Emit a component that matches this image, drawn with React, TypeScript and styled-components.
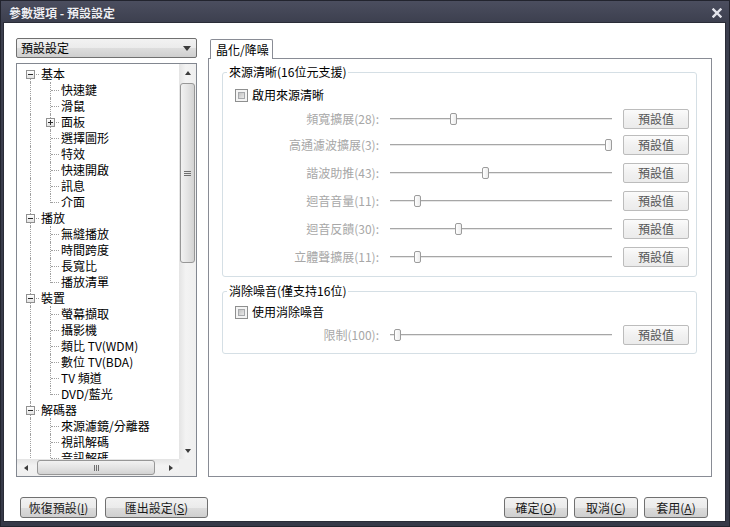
import React from "react";
import styled, { createGlobalStyle } from "styled-components";

const GlobalStyle = createGlobalStyle`
  html, body {
    margin: 0;
    padding: 0;
    background: #2f3240;
  }
  body {
    font-family: "Noto Sans CJK TC", "Liberation Sans", sans-serif;
    font-size: 12px;
  }
`;

type VLine = "full" | "top" | "bottom" | "none";

type TreeItem = {
  label: string
  level: 0 | 1
  expander?: "minus" | "plus"
  first?: boolean
  last?: boolean
};

const tree: TreeItem[] = [
  { label: "基本", level: 0, expander: "minus", first: true },
  { label: "快速鍵", level: 1 },
  { label: "滑鼠", level: 1 },
  { label: "面板", level: 1, expander: "plus" },
  { label: "選擇圖形", level: 1 },
  { label: "特效", level: 1 },
  { label: "快速開啟", level: 1 },
  { label: "訊息", level: 1 },
  { label: "介面", level: 1, last: true },
  { label: "播放", level: 0, expander: "minus" },
  { label: "無縫播放", level: 1 },
  { label: "時間跨度", level: 1 },
  { label: "長寬比", level: 1 },
  { label: "播放清單", level: 1, last: true },
  { label: "裝置", level: 0, expander: "minus" },
  { label: "螢幕擷取", level: 1 },
  { label: "攝影機", level: 1 },
  { label: "類比 TV(WDM)", level: 1 },
  { label: "數位 TV(BDA)", level: 1 },
  { label: "TV 頻道", level: 1 },
  { label: "DVD/藍光", level: 1, last: true },
  { label: "解碼器", level: 0, expander: "minus" },
  { label: "來源濾鏡/分離器", level: 1 },
  { label: "視訊解碼", level: 1 },
  { label: "音訊解碼", level: 1 },
];

type SliderItem = {
  label: string
  pos: number
  top: number
};

const clarity: SliderItem[] = [
  { label: "頻寬擴展(28):", pos: 0.28, top: 6 },
  { label: "高通濾波擴展(3):", pos: 1, top: 6 },
  { label: "諧波助推(43):", pos: 0.43, top: 8 },
  { label: "迴音音量(11):", pos: 0.11, top: 8 },
  { label: "迴音反饋(30):", pos: 0.3, top: 8 },
  { label: "立體聲擴展(11):", pos: 0.11, top: 8 },
];

const TRACK_WIDTH = 222;
const THUMB_WIDTH = 7;

export default function App() {
  return (
    <>
      <GlobalStyle />
      <Window>
        <TitleBar>
          <span>參數選項 - 預設設定</span>
          <CloseIcon width="10" height="10" viewBox="0 0 10 10">
            <path d="M1.5 1.5 L8.5 8.5 M8.5 1.5 L1.5 8.5" stroke="#e4e5ec" strokeWidth="2.4" strokeLinecap="square" />
          </CloseIcon>
        </TitleBar>

        <Client>
          <MainRow>
            <LeftCol>
              <Combo>
                <span>預設設定</span>
                <Arrow $dir="down" $size={4} />
              </Combo>

              <TreeBox>
                <TreeContent>
                  {tree.map((item) => (
                    <TreeRow key={item.label}>
                      {item.level === 0 ? (
                        <Guide $v={item.first ? "bottom" : "full"} $h>
                          {item.expander && <Expander $plus={item.expander === "plus"} />}
                        </Guide>
                      ) : (
                        <>
                          <Guide $v="full" />
                          <Guide $v={item.last ? "top" : "full"} $h>
                            {item.expander && <Expander $plus={item.expander === "plus"} />}
                          </Guide>
                        </>
                      )}
                      <TreeLabel>{item.label}</TreeLabel>
                    </TreeRow>
                  ))}
                </TreeContent>

                <VScroll>
                  <ScrollButton><Arrow $dir="up" $size={3} /></ScrollButton>
                  <VTrack>
                    <VThumb>
                      <Grip $vertical={false} />
                    </VThumb>
                  </VTrack>
                  <ScrollButton><Arrow $dir="down" $size={3} /></ScrollButton>
                </VScroll>

                <HScroll>
                  <ScrollButton><Arrow $dir="left" $size={3} /></ScrollButton>
                  <HTrack>
                    <HThumb>
                      <Grip $vertical />
                    </HThumb>
                  </HTrack>
                  <ScrollButton><Arrow $dir="right" $size={3} /></ScrollButton>
                </HScroll>

                <Corner />
              </TreeBox>
            </LeftCol>

            <RightCol>
              <TabStrip>
                <Tab>晶化/降噪</Tab>
              </TabStrip>
              <Panel>
                <Group $top={5} $bottom={9}>
                  <Legend>來源清晰(16位元支援)</Legend>
                  <CheckRow $top={7}>
                    <CheckBox />
                    <span>啟用來源清晰</span>
                  </CheckRow>
                  {clarity.map((s) => (
                    <SliderRow key={s.label} $top={s.top}>
                      <SliderLabel>{s.label}</SliderLabel>
                      <Track>
                        <Thumb style={{ left: Math.round(s.pos * (TRACK_WIDTH - THUMB_WIDTH)) }} />
                      </Track>
                      <SmallButton>預設值</SmallButton>
                    </SliderRow>
                  ))}
                </Group>

                <Group $top={6} $bottom={8}>
                  <Legend>消除噪音(僅支持16位)</Legend>
                  <CheckRow $top={5}>
                    <CheckBox />
                    <span>使用消除噪音</span>
                  </CheckRow>
                  <SliderRow $top={5}>
                    <SliderLabel>限制(100):</SliderLabel>
                    <Track>
                      <Thumb style={{ left: Math.round(0.02 * (TRACK_WIDTH - THUMB_WIDTH)) }} />
                    </Track>
                    <SmallButton>預設值</SmallButton>
                  </SliderRow>
                </Group>
              </Panel>
            </RightCol>
          </MainRow>

          <BottomRow>
            <ButtonGroup $gap={8}>
              <DialogButton $w={77}>恢復預設(<u>I</u>)</DialogButton>
              <DialogButton $w={103}>匯出設定(<u>S</u>)</DialogButton>
            </ButtonGroup>
            <ButtonGroup $gap={6}>
              <DialogButton $w={64}>確定(<u>O</u>)</DialogButton>
              <DialogButton $w={64}>取消(<u>C</u>)</DialogButton>
              <DialogButton $w={64}>套用(<u>A</u>)</DialogButton>
            </ButtonGroup>
          </BottomRow>
        </Client>
      </Window>
    </>
  );
}

const Window = styled.div`
  width: 730px;
  height: 527px;
  box-sizing: border-box;
  display: flex;
  flex-direction: column;
  border: 1px solid #22242e;
  padding: 0 4px 5px 3px;
  background: linear-gradient(#4b4e5f, #3c3f4e 22px, #363948);
`;

const TitleBar = styled.div`
  height: 22px;
  flex: none;
  display: flex;
  align-items: center;
  justify-content: space-between;
  padding: 1px 3px 0 5px;
  box-sizing: border-box;
  color: #eeeef3;
  font-weight: bold;
  font-size: 12px;
  line-height: 16px;
  text-shadow: 0 0 1px #22242e;
`;

const CloseIcon = styled.svg`
  display: block;
  margin-right: 0;
`;

const Client = styled.div`
  flex: 1;
  display: flex;
  flex-direction: column;
  background: #fff;
  padding: 15px 13px 3px 12px;
  box-sizing: border-box;
  box-shadow: 0 0 0 1px #2a2c37;
`;

const MainRow = styled.div`
  height: 439px;
  display: flex;
  gap: 11px;
`;

const LeftCol = styled.div`
  width: 181px;
  flex: none;
  display: flex;
  flex-direction: column;
  gap: 5px;
`;

const Combo = styled.div`
  height: 20px;
  box-sizing: border-box;
  display: flex;
  align-items: center;
  justify-content: space-between;
  padding: 0 5px 0 4px;
  border: 1px solid #707070;
  border-radius: 2px;
  background: linear-gradient(#f2f2f2, #ebebeb 50%, #dddddd 51%, #cfcfcf);
  line-height: 16px;
  color: #000;
`;

const Arrow = styled.span<{ $dir: "up" | "down" | "left" | "right"; $size: number }>`
  display: block;
  width: 0;
  height: 0;
  ${({ $dir, $size }) => {
    const s = `${$size}px solid transparent`;
    const c = `${$size + 1}px solid #3c3c3c`;
    if ($dir === "up") return `border-left: ${s}; border-right: ${s}; border-bottom: ${c};`;
    if ($dir === "down") return `border-left: ${s}; border-right: ${s}; border-top: ${c};`;
    if ($dir === "left") return `border-top: ${s}; border-bottom: ${s}; border-right: ${c};`;
    return `border-top: ${s}; border-bottom: ${s}; border-left: ${c};`;
  }}
`;

const TreeBox = styled.div`
  flex: 1;
  display: grid;
  grid-template-columns: 1fr 17px;
  grid-template-rows: 1fr 17px;
  border: 1px solid #828790;
  min-height: 0;
`;

const TreeContent = styled.div`
  overflow: hidden;
  padding: 2px 0 0 3px;
  min-height: 0;
`;

const TreeRow = styled.div`
  display: flex;
  height: 16px;
  line-height: 16px;
  color: #000;
  white-space: nowrap;
`;

const Guide = styled.span<{ $v: VLine; $h?: boolean }>`
  position: relative;
  flex: none;
  width: 20px;
  height: 16px;

  &::before {
    content: "";
    display: ${({ $v }) => ($v === "none" ? "none" : "block")};
    position: absolute;
    left: 10px;
    top: ${({ $v }) => ($v === "bottom" ? "8px" : "0")};
    bottom: ${({ $v }) => ($v === "top" ? "7px" : "0")};
    border-left: 1px dotted #a0a0a0;
  }

  &::after {
    content: "";
    display: ${({ $h }) => ($h ? "block" : "none")};
    position: absolute;
    left: 11px;
    right: 1px;
    top: 8px;
    border-top: 1px dotted #a0a0a0;
  }
`;

const Expander = styled.span<{ $plus: boolean }>`
  position: absolute;
  z-index: 1;
  left: 6px;
  top: 4px;
  width: 9px;
  height: 9px;
  box-sizing: border-box;
  border: 1px solid #919191;
  background: linear-gradient(#ffffff, #e3e3e3);

  &::before {
    content: "";
    position: absolute;
    left: 1px;
    right: 1px;
    top: 3px;
    height: 1px;
    background: #2b2b2b;
  }

  &::after {
    content: "";
    display: ${({ $plus }) => ($plus ? "block" : "none")};
    position: absolute;
    top: 1px;
    bottom: 1px;
    left: 3px;
    width: 1px;
    background: #2b2b2b;
  }
`;

const TreeLabel = styled.span`
  padding-left: 1px;
`;

const VScroll = styled.div`
  display: flex;
  flex-direction: column;
  background: linear-gradient(to right, #e4e4e4, #f3f3f3 40%, #efefef);
`;

const HScroll = styled.div`
  display: flex;
  background: linear-gradient(#e4e4e4, #f3f3f3 40%, #efefef);
`;

const Corner = styled.div`
  background: #f0f0f0;
`;

const ScrollButton = styled.div`
  width: 17px;
  height: 17px;
  flex: none;
  display: flex;
  align-items: center;
  justify-content: center;
`;

const VTrack = styled.div`
  flex: 1;
  padding: 2px 1px 0;
`;

const HTrack = styled.div`
  flex: 1;
  display: flex;
  padding: 1px 0 1px 3px;
`;

const thumbFace = `
  box-sizing: border-box;
  border: 1px solid #979797;
  border-radius: 3px;
  display: flex;
  align-items: center;
  justify-content: center;
`;

const VThumb = styled.div`
  ${thumbFace}
  height: 180px;
  background: linear-gradient(to right, #f2f2f2, #e4e4e4 50%, #d3d3d3);
`;

const HThumb = styled.div`
  ${thumbFace}
  width: 118px;
  background: linear-gradient(#f2f2f2, #e4e4e4 50%, #d3d3d3);
`;

const Grip = styled.span<{ $vertical: boolean }>`
  display: block;
  ${({ $vertical }) =>
    $vertical
      ? `width: 5px; height: 6px;
         background: repeating-linear-gradient(to right, #6f6f6f 0 1px, transparent 1px 2px);`
      : `width: 7px; height: 5px;
         background: repeating-linear-gradient(#6f6f6f 0 1px, transparent 1px 2px);`}
`;

const RightCol = styled.div`
  flex: 1;
  display: flex;
  flex-direction: column;
  min-width: 0;
`;

const TabStrip = styled.div`
  height: 20px;
  flex: none;
  display: flex;
  align-items: flex-end;
  padding-left: 2px;
`;

const Tab = styled.div`
  position: relative;
  z-index: 1;
  width: 63px;
  height: 20px;
  box-sizing: border-box;
  margin-bottom: -1px;
  padding-left: 5px;
  border: 1px solid #898c95;
  border-bottom: none;
  border-radius: 2px 2px 0 0;
  background: #fff;
  line-height: 19px;
  color: #000;
`;

const Panel = styled.div`
  flex: 1;
  display: flex;
  flex-direction: column;
  border: 1px solid #898c95;
  background: #fff;
`;

const Group = styled.fieldset<{ $top: number; $bottom: number }>`
  margin: ${({ $top }) => $top}px 14px 0 13px;
  padding: 0 8px ${({ $bottom }) => $bottom}px 0;
  min-width: 0;
  border: 1px solid #d5dfe5;
  border-radius: 3px;
`;

const Legend = styled.legend`
  margin-left: 4px;
  padding: 0 2px;
  line-height: 16px;
  font-size: 12px;
  color: #000;
`;

const CheckRow = styled.div<{ $top: number }>`
  display: flex;
  align-items: center;
  gap: 4px;
  height: 16px;
  line-height: 16px;
  margin-top: ${({ $top }) => $top}px;
  padding-left: 12px;
  color: #000;
`;

const CheckBox = styled.span`
  position: relative;
  width: 13px;
  height: 13px;
  flex: none;
  box-sizing: border-box;
  border: 1px solid #8e8f8f;
  background: #f4f4f4;

  &::after {
    content: "";
    position: absolute;
    inset: 2px;
    border: 1px solid #a7a9ac;
    background: linear-gradient(135deg, #c3c3c3, #e9e9e9);
  }
`;

const SliderRow = styled.div<{ $top: number }>`
  display: flex;
  align-items: center;
  height: 20px;
  margin-top: ${({ $top }) => $top}px;
`;

const SliderLabel = styled.span`
  width: 156px;
  flex: none;
  margin-right: 11px;
  text-align: right;
  line-height: 16px;
  color: #a7a7a7;
`;

const Track = styled.div`
  position: relative;
  width: ${TRACK_WIDTH}px;
  height: 12px;
  flex: none;
  margin-right: 11px;

  &::before {
    content: "";
    position: absolute;
    left: 0;
    right: 0;
    top: 5px;
    height: 1px;
    background: #a6a6a6;
    border-bottom: 1px solid #e7e7e7;
  }
`;

const Thumb = styled.span`
  position: absolute;
  top: 0;
  width: ${THUMB_WIDTH}px;
  height: 12px;
  box-sizing: border-box;
  border: 1px solid #9c9c9c;
  border-radius: 2px;
  background: linear-gradient(to right, #ffffff, #ececec);
`;

const SmallButton = styled.button`
  width: 66px;
  height: 20px;
  flex: none;
  padding: 0;
  box-sizing: border-box;
  border: 1px solid #bcbcbc;
  border-radius: 2px;
  background: linear-gradient(#fbfbfb, #f1f1f1 50%, #ebebeb);
  font-family: "Noto Sans CJK TC", "Liberation Sans", sans-serif;
  font-size: 12px;
  line-height: 16px;
  color: #555;
`;

const BottomRow = styled.div`
  margin-top: 20px;
  display: flex;
  justify-content: space-between;
  padding: 0 4px;
`;

const ButtonGroup = styled.div<{ $gap: number }>`
  display: flex;
  gap: ${({ $gap }) => $gap}px;
`;

const DialogButton = styled.button<{ $w: number }>`
  width: ${({ $w }) => $w}px;
  height: 21px;
  padding: 0;
  box-sizing: border-box;
  border: 1px solid #707070;
  border-radius: 3px;
  background: linear-gradient(#f2f2f2, #ebebeb 50%, #dddddd 51%, #cfcfcf);
  font-family: "Noto Sans CJK TC", "Liberation Sans", sans-serif;
  font-size: 12px;
  line-height: 16px;
  color: #1a1a1a;

  u {
    text-underline-offset: 1px;
  }
`;
